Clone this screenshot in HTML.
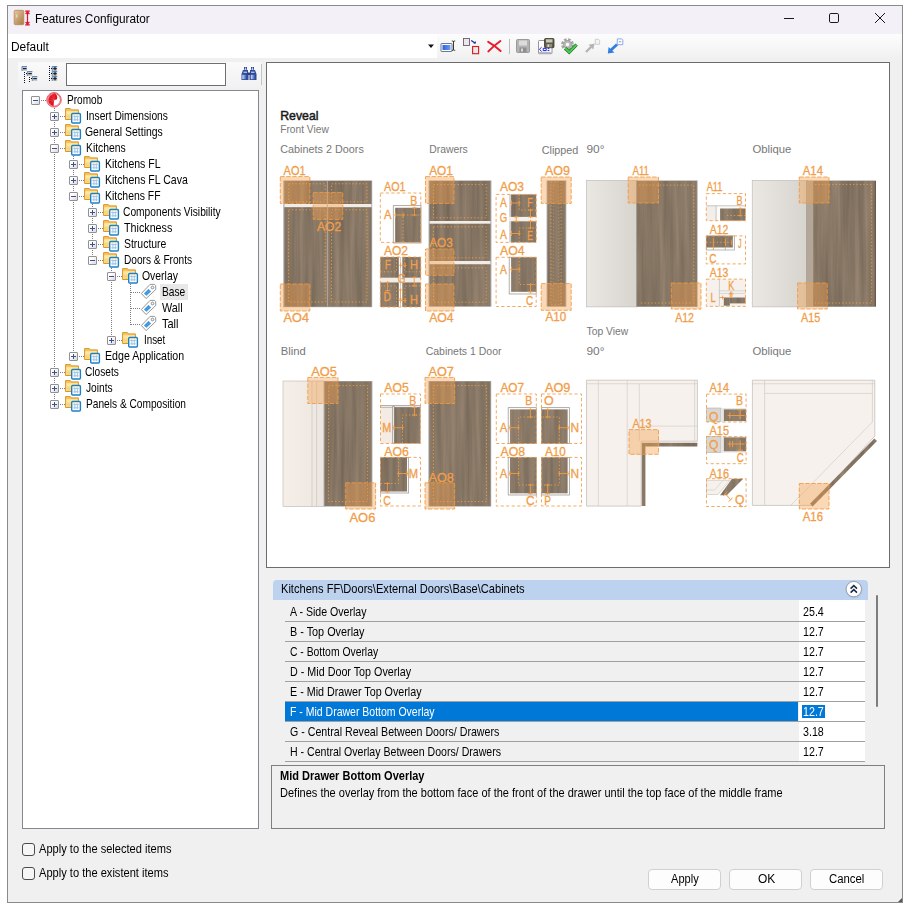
<!DOCTYPE html>
<html lang="en"><head><meta charset="utf-8"><title>Features Configurator</title>
<style>
html,body{margin:0;padding:0;background:#fff;}
body{width:920px;height:913px;position:relative;overflow:hidden;font-family:"Liberation Sans",sans-serif;font-size:11px;color:#000;}
.a{position:absolute;box-sizing:border-box;}
.t{position:absolute;white-space:pre;display:block;transform-origin:0 0;}
svg{position:absolute;overflow:visible;}
.dv{position:absolute;width:1px;background:repeating-linear-gradient(to bottom,#7c7c7c 0 1px,transparent 1px 2px);}
.dh{position:absolute;height:1px;background:repeating-linear-gradient(to right,#7c7c7c 0 1px,transparent 1px 2px);}
.bx{position:absolute;width:9px;height:9px;box-sizing:border-box;border:1px solid #919191;background:linear-gradient(135deg,#fff 30%,#d8d8d8);border-radius:1px;}
.bx i{position:absolute;left:1px;top:3px;width:5px;height:1px;background:#3c4f94;}
.bx b{position:absolute;left:3px;top:1px;width:1px;height:5px;background:#3c4f94;}
.btn{position:absolute;box-sizing:border-box;border:1px solid #d0d0d0;border-radius:4px;background:#fdfdfd;}
.row{position:absolute;box-sizing:border-box;left:285px;width:580px;height:20px;border-bottom:1px solid #a0a0a0;}
</style></head>
<body>
<div class="a" style="left:7px;top:5px;width:896px;height:898px;border:1px solid #8a8a8a;background:#f0f0f0;"></div><div class="a" style="left:8px;top:6px;width:894px;height:27.5px;background:#f3f1f7;"></div><svg style="left:13px;top:9px" width="20" height="18" viewBox="0 0 20 18"><defs><linearGradient id="gi" x1="0" y1="0" x2="1" y2="1"><stop offset="0" stop-color="#e6c9a0"/><stop offset="1" stop-color="#a9783f"/></linearGradient></defs><rect x="1.2" y="1.3" width="9.6" height="14.4" rx="1.2" fill="url(#gi)" stroke="#b08a5c" stroke-width="0.8"/><rect x="3.3" y="5.5" width="1" height="3" fill="#e8e8f0"/><path d="M14.5 2.5V15.5M12.2 2.2H16.8M12.2 15.8H16.8M12.6 5L14.5 2.8L16.4 5M12.6 13L14.5 15.2L16.4 13" fill="none" stroke="#e3122a" stroke-width="1.2"/></svg><span id="t1" class="t" style="left:35.20px;top:13.40px;font-size:12.4px;line-height:12.4px;color:#000;transform:scaleX(0.9525);">Features Configurator</span><svg style="left:780px;top:8px" width="110" height="20" viewBox="780 8 110 20" fill="none" stroke="#1a1a1a" stroke-width="1"><path d="M784 18.5H794"/><rect x="829.5" y="13.5" width="9" height="9" rx="1.3"/><path d="M875 13L885 23M885 13L875 23"/></svg><div class="a" style="left:8px;top:33.5px;width:894px;height:24.5px;background:linear-gradient(#fdfdfd,#f1f1f1);"></div><div class="a" style="left:8px;top:33.5px;width:429px;height:24.5px;background:#fff;"></div><span id="t2" class="t" style="left:11.20px;top:41.44px;font-size:12px;line-height:12px;color:#000;transform:scaleX(0.9939);">Default</span><svg style="left:427px;top:44px" width="8" height="5" viewBox="0 0 8 5"><path d="M1 0.5H7L4 4Z" fill="#111"/></svg><svg style="left:440px;top:40px" width="16" height="14" viewBox="0 0 16 14"><defs><linearGradient id="gb" x1="0" y1="0" x2="1" y2="0"><stop offset="0" stop-color="#2a62e0"/><stop offset="1" stop-color="#6f9df0"/></linearGradient></defs><rect x="1" y="3.500" width="11" height="8" rx="0.5" fill="#fff" stroke="#5a6a86" stroke-width="0.9"/><rect x="2.500" y="5" width="8" height="5" fill="url(#gb)"/><path d="M13.500 1.800V9.600M11.800 1H12.500Q13.500 1 13.500 2Q13.500 1 14.500 1H15.200M11.800 10.400H12.500Q13.500 10.400 13.500 9.400Q13.500 10.400 14.500 10.400H15.200" stroke="#222" stroke-width="0.9" fill="none"/></svg><svg style="left:463px;top:38px" width="17" height="17" viewBox="0 0 17 17"><rect x="0.500" y="0.500" width="6" height="7" fill="#e9e9ec" stroke="#6d5a72" stroke-width="0.9"/><rect x="9.600" y="8.500" width="6" height="7.200" fill="#e9e9ec" stroke="#e01818" stroke-width="1.100"/><path d="M8.200 2.400L12 5" stroke="#1c2f94" stroke-width="1.200" fill="none"/><path d="M10.400 5.600L13 5.600L12.600 3Z" fill="#1c2f94"/></svg><svg style="left:487px;top:40px" width="15" height="13" viewBox="0 0 15 13"><path d="M1.200 1.800Q7 5 13.600 11M13.400 1Q7 5.500 1.400 11.400" stroke="#ea1c2c" stroke-width="2" stroke-linecap="round" fill="none"/></svg><div class="a" style="left:509px;top:39px;width:1px;height:15px;background:#bdbdbd;"></div><svg style="left:516px;top:39px" width="14" height="14" viewBox="0 0 14 14"><rect x="0.5" y="0.5" width="13" height="13" rx="1" fill="#b4b4b4" stroke="#9a9a9a"/><rect x="3" y="1.5" width="8" height="5" fill="#dcdcdc"/><rect x="3.5" y="8.5" width="7" height="4.5" fill="#8f8f8f"/><rect x="5" y="9.5" width="2" height="3" fill="#d8d8d8"/></svg><svg style="left:538px;top:38px" width="17" height="17" viewBox="0 0 17 17"><rect x="0.500" y="2.500" width="13.500" height="13.200" rx="0.800" fill="#fff" stroke="#8a8a96" stroke-width="0.9"/><rect x="1" y="13.800" width="12.500" height="1.500" fill="#b8b8c0"/><rect x="6.500" y="0.500" width="9.500" height="9.200" rx="1" fill="#5c5a46" stroke="#3a392c" stroke-width="0.8"/><rect x="8" y="1.300" width="6.500" height="3.200" fill="#c9c7ba"/><rect x="8.500" y="6" width="5.500" height="3.300" fill="#8d8b7c"/><rect x="9.500" y="6.500" width="1.600" height="2.500" fill="#d8d6c8"/><path d="M3.600 9.200L1.400 11.300L3.600 13.400M5.200 10.300H8.200V12.600H5.200ZM9.600 10.400H11.400M9.600 12.400H11.400" stroke="#1a22e0" stroke-width="1" fill="none"/></svg><svg style="left:560px;top:37px" width="19" height="18" viewBox="0 0 19 18"><circle cx="7.500" cy="7.500" r="4.700" fill="none" stroke="#a3a3a3" stroke-width="3.400" stroke-dasharray="2.300 1.390"/><circle cx="7.500" cy="7.500" r="3.800" fill="#bdbdbd" stroke="#a3a3a3" stroke-width="1.200"/><circle cx="7.500" cy="7.500" r="1.700" fill="#fafafa"/><path d="M5.200 11.200L9.200 15.200L16.600 7.600" fill="none" stroke="#1c7e2a" stroke-width="3.400"/><path d="M5.200 11.200L9.200 15.200L16.600 7.600" fill="none" stroke="#52cc52" stroke-width="1.700"/></svg><svg style="left:585px;top:38px" width="16" height="16" viewBox="0 0 16 16"><path d="M10.300 1.300H13.600L14.600 2.300V6.300H10.300Z" fill="#f4f4f4" stroke="#c4c4c4" stroke-width="0.8"/><path d="M1 14L6.500 8.500" stroke="#b4b4b4" stroke-width="2.400"/><path d="M3.600 6.800L9.600 5.400L8.200 11.400Z" fill="#b4b4b4"/></svg><svg style="left:607px;top:38px" width="17" height="16" viewBox="0 0 17 16"><path d="M10.300 0.900H14.600L15.800 2.100V6.700H10.300Z" fill="#fff" stroke="#7f9fe0" stroke-width="0.9"/><path d="M11.800 3.800h2.500" stroke="#6f8fd0" stroke-width="0.9"/><path d="M4 12L10 6.500" stroke="#2f7fe0" stroke-width="2.800"/><path d="M0.800 15.400L1.600 9L7.400 14.600Z" fill="#2f7fe0"/></svg><div class="a" style="left:18px;top:62px;width:243px;height:26px;background:linear-gradient(#fafafa,#f1f1f1);"></div><div class="a" style="left:261px;top:64px;width:1px;height:21px;background:#c4c4c4;"></div><div class="a" style="left:66px;top:63px;width:160px;height:23px;border:1px solid #6f6f6f;background:#fff;"></div><svg style="left:22px;top:66px" width="16" height="17" viewBox="22 66 16 17"><rect x="22" y="66" width="5" height="5" fill="#c9c9c9"/><path d="M22 71V66.5H27" fill="none" stroke="#5b8cc8" stroke-width="1"/><rect x="23" y="68" width="3.500" height="1.200" fill="#222"/><rect x="27.3" y="71" width="5" height="5" fill="#c9c9c9"/><path d="M27.3 76V71.5H32.3" fill="none" stroke="#5b8cc8" stroke-width="1"/><rect x="28.3" y="73" width="3.500" height="1.200" fill="#222"/><rect x="32.3" y="76" width="5" height="5" fill="#c9c9c9"/><path d="M32.3 81V76.5H37.3" fill="none" stroke="#5b8cc8" stroke-width="1"/><rect x="33.3" y="78" width="3.500" height="1.200" fill="#222"/><rect x="24" y="72" width="1" height="1" fill="#111"/><rect x="24" y="74" width="1" height="1" fill="#111"/><rect x="24" y="76" width="1" height="1" fill="#111"/><rect x="24" y="78" width="1" height="1" fill="#111"/><rect x="24" y="80" width="1" height="1" fill="#111"/><rect x="24" y="82" width="1" height="1" fill="#111"/><rect x="26" y="73" width="1" height="1" fill="#111"/><rect x="29" y="77" width="1" height="1" fill="#111"/><rect x="29" y="79" width="1" height="1" fill="#111"/><rect x="29" y="81" width="1" height="1" fill="#111"/><rect x="31" y="78" width="1" height="1" fill="#111"/></svg><svg style="left:48px;top:66px" width="10" height="17" viewBox="48 66 10 17"><rect x="52.2" y="66" width="5" height="5" fill="#c9c9c9"/><path d="M52.2 71V66.5H57.2" fill="none" stroke="#5b8cc8" stroke-width="1"/><rect x="53.2" y="68" width="3.500" height="1.200" fill="#222"/><rect x="54.400000000000006" y="66.8" width="1.200" height="3.600" fill="#222"/><rect x="52.2" y="71" width="5" height="5" fill="#c9c9c9"/><path d="M52.2 76V71.5H57.2" fill="none" stroke="#5b8cc8" stroke-width="1"/><rect x="53.2" y="73" width="3.500" height="1.200" fill="#222"/><rect x="54.400000000000006" y="71.8" width="1.200" height="3.600" fill="#222"/><rect x="52.2" y="76" width="5" height="5" fill="#c9c9c9"/><path d="M52.2 81V76.5H57.2" fill="none" stroke="#5b8cc8" stroke-width="1"/><rect x="53.2" y="78" width="3.500" height="1.200" fill="#222"/><rect x="54.400000000000006" y="76.8" width="1.200" height="3.600" fill="#222"/><rect x="49" y="66" width="1" height="1" fill="#111"/><rect x="49" y="68" width="1" height="1" fill="#111"/><rect x="49" y="70" width="1" height="1" fill="#111"/><rect x="49" y="72" width="1" height="1" fill="#111"/><rect x="49" y="74" width="1" height="1" fill="#111"/><rect x="49" y="76" width="1" height="1" fill="#111"/><rect x="49" y="78" width="1" height="1" fill="#111"/><rect x="49" y="80" width="1" height="1" fill="#111"/><rect x="51" y="68" width="1" height="1" fill="#111"/><rect x="51" y="73" width="1" height="1" fill="#111"/><rect x="51" y="78" width="1" height="1" fill="#111"/></svg><svg style="left:241px;top:66px" width="16" height="15" viewBox="0 0 16 15"><defs><linearGradient id="bn" x1="0" y1="0" x2="1" y2="0"><stop offset="0" stop-color="#d4def6"/><stop offset="0.45" stop-color="#7f98d8"/><stop offset="1" stop-color="#2a4494"/></linearGradient></defs><path d="M3 1h3v3h1v4h0.500v6h-7v-6l1.500-4h1z" fill="#2f4b9a"/><path d="M10 1h3v3h1l1.500 4v6h-7v-6h0.500v-4h1z" fill="#2f4b9a"/><rect x="6.500" y="6.500" width="3" height="2.500" fill="#2a3f86"/><rect x="1.300" y="8.800" width="4.600" height="4.400" fill="url(#bn)"/><rect x="9.800" y="8.800" width="4.600" height="4.400" fill="url(#bn)"/><path d="M2.500 6.200h3.500M10 6.200h3.500M3.600 3.300h1.800M10.600 3.300h1.800" stroke="#e8eefc" stroke-width="1"/><rect x="4" y="1.600" width="1" height="1" fill="#fff"/><rect x="11" y="1.600" width="1" height="1" fill="#fff"/></svg><div class="a" style="left:22px;top:843px;width:13px;height:13px;border:1px solid #4c4c4c;border-radius:3px;background:#f6f6f6;"></div><span id="t3" class="t" style="left:39.00px;top:843.34px;font-size:12px;line-height:12px;color:#000;transform:scaleX(0.9238);">Apply to the selected items</span><div class="a" style="left:22px;top:867px;width:13px;height:13px;border:1px solid #4c4c4c;border-radius:3px;background:#f6f6f6;"></div><span id="t4" class="t" style="left:39.00px;top:867.34px;font-size:12px;line-height:12px;color:#000;transform:scaleX(0.9245);">Apply to the existent items</span><div class="btn" style="left:648px;top:869px;width:73px;height:21px;"></div><span id="t5" class="t" style="left:671.00px;top:873.04px;font-size:12px;line-height:12px;color:#000;transform:scaleX(0.9224);">Apply</span><div class="btn" style="left:729px;top:869px;width:73px;height:21px;"></div><span id="t6" class="t" style="left:757.70px;top:873.04px;font-size:12px;line-height:12px;color:#000;transform:scaleX(0.9975);">OK</span><div class="btn" style="left:810px;top:869px;width:73px;height:21px;"></div><span id="t7" class="t" style="left:828.60px;top:873.04px;font-size:12px;line-height:12px;color:#000;transform:scaleX(0.9476);">Cancel</span><svg style="left:898px;top:898px" width="4" height="4" viewBox="0 0 4 4"><path d="M4 0V4H0Z" fill="#555"/></svg><div class="a" style="left:22px;top:90px;width:237px;height:739px;border:1px solid #828790;background:#fff;"></div><div class="dv" style="left:54px;top:108px;height:297px;"></div><div class="dv" style="left:73px;top:156px;height:201px;"></div><div class="dv" style="left:92px;top:204px;height:57px;"></div><div class="dv" style="left:111px;top:268px;height:73px;"></div><div class="dv" style="left:130px;top:284px;height:41px;"></div><div class="dh" style="left:41px;top:100px;width:5px;"></div><div class="bx" style="left:31px;top:96px;"><i></i></div><svg style="left:46px;top:92px" width="16" height="16" viewBox="0 0 16 16"><circle cx="8" cy="7.800" r="7.300" fill="#fff" stroke="#e2202e" stroke-width="0.700"/><circle cx="8" cy="7.800" r="6.400" fill="none" stroke="#e2202e" stroke-width="0.700"/><path d="M7.600 1.900c1.300-.2 2.500.3 3 1.100.5.800.3 1.400.6 2 .3.500.3 1-.2 1.400.2.500-.1 1-.7 1.100l-1.600.5-.8.500-.2 5.300c-3 0-5.400-2.600-5.400-5.800 0-3.100 2.200-5.600 5.300-6.100z" fill="#e0121f"/><path d="M8.200 8L3.200 5.200M8.200 8L2.600 8.600M8.200 8L4 11.600M8.200 8L5.600 2.600M8.200 8L8.200 2" stroke="#f0686f" stroke-width="0.400" fill="none"/></svg><span id="t8" class="t" style="left:66.80px;top:93.67px;font-size:12.2px;line-height:12.2px;color:#000;transform:scaleX(0.8269);">Promob</span><div class="dh" style="left:60px;top:116px;width:5px;"></div><div class="bx" style="left:50px;top:112px;"><i></i><b></b></div><svg style="left:65px;top:108px" width="16" height="16" viewBox="0 0 16 16"><path d="M0.600 0.600h4.800l1.100 1.300h6.900v9.600h-12.800z" fill="#f6c560" stroke="#d8962c" stroke-width="1"/><path d="M1.200 3.200h11.600v7.700h-11.600z" fill="#fde7a4"/><path d="M1.200 6.600h11.600v4.300h-11.600z" fill="#f9d57c"/><rect x="6.700" y="5.500" width="8.700" height="9.500" rx="1" fill="#fff" stroke="#1c80c6" stroke-width="1.400"/><path d="M8.300 8.600h5.500M8.300 11.800h5.500M9.900 7.700v5.500M12.300 7.700v5.500" stroke="#9cc4ea" stroke-width="1" fill="none"/><path d="M8.500 7.300h1.800M11.800 7.300h1.800" stroke="#f3d27a" stroke-width="0.800"/></svg><span id="t9" class="t" style="left:86.20px;top:109.67px;font-size:12.2px;line-height:12.2px;color:#000;transform:scaleX(0.8396);">Insert Dimensions</span><div class="dh" style="left:60px;top:132px;width:5px;"></div><div class="bx" style="left:50px;top:128px;"><i></i><b></b></div><svg style="left:65px;top:124px" width="16" height="16" viewBox="0 0 16 16"><path d="M0.600 0.600h4.800l1.100 1.300h6.900v9.600h-12.800z" fill="#f6c560" stroke="#d8962c" stroke-width="1"/><path d="M1.200 3.200h11.600v7.700h-11.600z" fill="#fde7a4"/><path d="M1.200 6.600h11.600v4.300h-11.600z" fill="#f9d57c"/><rect x="6.700" y="5.500" width="8.700" height="9.500" rx="1" fill="#fff" stroke="#1c80c6" stroke-width="1.400"/><path d="M8.300 8.600h5.500M8.300 11.800h5.500M9.900 7.700v5.500M12.300 7.700v5.500" stroke="#9cc4ea" stroke-width="1" fill="none"/><path d="M8.500 7.300h1.800M11.800 7.300h1.800" stroke="#f3d27a" stroke-width="0.800"/></svg><span id="t10" class="t" style="left:85.30px;top:125.67px;font-size:12.2px;line-height:12.2px;color:#000;transform:scaleX(0.8569);">General Settings</span><div class="dh" style="left:60px;top:148px;width:5px;"></div><div class="bx" style="left:50px;top:144px;"><i></i></div><svg style="left:65px;top:140px" width="16" height="16" viewBox="0 0 16 16"><path d="M0.600 0.600h4.800l1.100 1.300h6.900v9.600h-12.800z" fill="#f6c560" stroke="#d8962c" stroke-width="1"/><path d="M1.200 3.200h11.600v7.700h-11.600z" fill="#fde7a4"/><path d="M1.200 6.600h11.600v4.300h-11.600z" fill="#f9d57c"/><rect x="6.700" y="5.500" width="8.700" height="9.500" rx="1" fill="#fff" stroke="#1c80c6" stroke-width="1.400"/><path d="M8.300 8.600h5.500M8.300 11.800h5.500M9.900 7.700v5.500M12.300 7.700v5.500" stroke="#9cc4ea" stroke-width="1" fill="none"/><path d="M8.500 7.300h1.800M11.800 7.300h1.800" stroke="#f3d27a" stroke-width="0.800"/></svg><span id="t11" class="t" style="left:86.20px;top:141.67px;font-size:12.2px;line-height:12.2px;color:#000;transform:scaleX(0.8513);">Kitchens</span><div class="dh" style="left:79px;top:164px;width:5px;"></div><div class="bx" style="left:69px;top:160px;"><i></i><b></b></div><svg style="left:84px;top:156px" width="16" height="16" viewBox="0 0 16 16"><path d="M0.600 0.600h4.800l1.100 1.300h6.900v9.600h-12.800z" fill="#f6c560" stroke="#d8962c" stroke-width="1"/><path d="M1.200 3.200h11.600v7.700h-11.600z" fill="#fde7a4"/><path d="M1.200 6.600h11.600v4.300h-11.600z" fill="#f9d57c"/><rect x="6.700" y="5.500" width="8.700" height="9.500" rx="1" fill="#fff" stroke="#1c80c6" stroke-width="1.400"/><path d="M8.300 8.600h5.500M8.300 11.800h5.500M9.900 7.700v5.500M12.300 7.700v5.500" stroke="#9cc4ea" stroke-width="1" fill="none"/><path d="M8.500 7.300h1.800M11.800 7.300h1.800" stroke="#f3d27a" stroke-width="0.800"/></svg><span id="t12" class="t" style="left:105.10px;top:157.67px;font-size:12.2px;line-height:12.2px;color:#000;transform:scaleX(0.8639);">Kitchens FL</span><div class="dh" style="left:79px;top:180px;width:5px;"></div><div class="bx" style="left:69px;top:176px;"><i></i><b></b></div><svg style="left:84px;top:172px" width="16" height="16" viewBox="0 0 16 16"><path d="M0.600 0.600h4.800l1.100 1.300h6.900v9.600h-12.800z" fill="#f6c560" stroke="#d8962c" stroke-width="1"/><path d="M1.200 3.200h11.600v7.700h-11.600z" fill="#fde7a4"/><path d="M1.200 6.600h11.600v4.300h-11.600z" fill="#f9d57c"/><rect x="6.700" y="5.500" width="8.700" height="9.500" rx="1" fill="#fff" stroke="#1c80c6" stroke-width="1.400"/><path d="M8.300 8.600h5.500M8.300 11.800h5.500M9.900 7.700v5.500M12.300 7.700v5.500" stroke="#9cc4ea" stroke-width="1" fill="none"/><path d="M8.500 7.300h1.800M11.800 7.300h1.800" stroke="#f3d27a" stroke-width="0.800"/></svg><span id="t13" class="t" style="left:105.10px;top:173.67px;font-size:12.2px;line-height:12.2px;color:#000;transform:scaleX(0.8648);">Kitchens FL Cava</span><div class="dh" style="left:79px;top:196px;width:5px;"></div><div class="bx" style="left:69px;top:192px;"><i></i></div><svg style="left:84px;top:188px" width="16" height="16" viewBox="0 0 16 16"><path d="M0.600 0.600h4.800l1.100 1.300h6.900v9.600h-12.800z" fill="#f6c560" stroke="#d8962c" stroke-width="1"/><path d="M1.200 3.200h11.600v7.700h-11.600z" fill="#fde7a4"/><path d="M1.200 6.600h11.600v4.300h-11.600z" fill="#f9d57c"/><rect x="6.700" y="5.500" width="8.700" height="9.500" rx="1" fill="#fff" stroke="#1c80c6" stroke-width="1.400"/><path d="M8.300 8.600h5.500M8.300 11.800h5.500M9.900 7.700v5.500M12.300 7.700v5.500" stroke="#9cc4ea" stroke-width="1" fill="none"/><path d="M8.500 7.300h1.800M11.800 7.300h1.800" stroke="#f3d27a" stroke-width="0.800"/></svg><span id="t14" class="t" style="left:105.10px;top:189.67px;font-size:12.2px;line-height:12.2px;color:#000;transform:scaleX(0.8550);">Kitchens FF</span><div class="dh" style="left:98px;top:212px;width:5px;"></div><div class="bx" style="left:88px;top:208px;"><i></i><b></b></div><svg style="left:103px;top:204px" width="16" height="16" viewBox="0 0 16 16"><path d="M0.600 0.600h4.800l1.100 1.300h6.900v9.600h-12.800z" fill="#f6c560" stroke="#d8962c" stroke-width="1"/><path d="M1.200 3.200h11.600v7.700h-11.600z" fill="#fde7a4"/><path d="M1.200 6.600h11.600v4.300h-11.600z" fill="#f9d57c"/><rect x="6.700" y="5.500" width="8.700" height="9.500" rx="1" fill="#fff" stroke="#1c80c6" stroke-width="1.400"/><path d="M8.300 8.600h5.500M8.300 11.800h5.500M9.900 7.700v5.500M12.300 7.700v5.500" stroke="#9cc4ea" stroke-width="1" fill="none"/><path d="M8.500 7.300h1.800M11.800 7.300h1.800" stroke="#f3d27a" stroke-width="0.800"/></svg><span id="t15" class="t" style="left:123.20px;top:205.67px;font-size:12.2px;line-height:12.2px;color:#000;transform:scaleX(0.8392);">Components Visibility</span><div class="dh" style="left:98px;top:228px;width:5px;"></div><div class="bx" style="left:88px;top:224px;"><i></i><b></b></div><svg style="left:103px;top:220px" width="16" height="16" viewBox="0 0 16 16"><path d="M0.600 0.600h4.800l1.100 1.300h6.900v9.600h-12.800z" fill="#f6c560" stroke="#d8962c" stroke-width="1"/><path d="M1.200 3.200h11.600v7.700h-11.600z" fill="#fde7a4"/><path d="M1.200 6.600h11.600v4.300h-11.600z" fill="#f9d57c"/><rect x="6.700" y="5.500" width="8.700" height="9.500" rx="1" fill="#fff" stroke="#1c80c6" stroke-width="1.400"/><path d="M8.300 8.600h5.500M8.300 11.800h5.500M9.900 7.700v5.500M12.300 7.700v5.500" stroke="#9cc4ea" stroke-width="1" fill="none"/><path d="M8.500 7.300h1.800M11.800 7.300h1.800" stroke="#f3d27a" stroke-width="0.800"/></svg><span id="t16" class="t" style="left:123.90px;top:221.67px;font-size:12.2px;line-height:12.2px;color:#000;transform:scaleX(0.8802);">Thickness</span><div class="dh" style="left:98px;top:244px;width:5px;"></div><div class="bx" style="left:88px;top:240px;"><i></i><b></b></div><svg style="left:103px;top:236px" width="16" height="16" viewBox="0 0 16 16"><path d="M0.600 0.600h4.800l1.100 1.300h6.900v9.600h-12.800z" fill="#f6c560" stroke="#d8962c" stroke-width="1"/><path d="M1.200 3.200h11.600v7.700h-11.600z" fill="#fde7a4"/><path d="M1.200 6.600h11.600v4.300h-11.600z" fill="#f9d57c"/><rect x="6.700" y="5.500" width="8.700" height="9.500" rx="1" fill="#fff" stroke="#1c80c6" stroke-width="1.400"/><path d="M8.300 8.600h5.500M8.300 11.800h5.500M9.900 7.700v5.500M12.300 7.700v5.500" stroke="#9cc4ea" stroke-width="1" fill="none"/><path d="M8.500 7.300h1.800M11.800 7.300h1.800" stroke="#f3d27a" stroke-width="0.800"/></svg><span id="t17" class="t" style="left:123.90px;top:237.67px;font-size:12.2px;line-height:12.2px;color:#000;transform:scaleX(0.8574);">Structure</span><div class="dh" style="left:98px;top:260px;width:5px;"></div><div class="bx" style="left:88px;top:256px;"><i></i></div><svg style="left:103px;top:252px" width="16" height="16" viewBox="0 0 16 16"><path d="M0.600 0.600h4.800l1.100 1.300h6.900v9.600h-12.800z" fill="#f6c560" stroke="#d8962c" stroke-width="1"/><path d="M1.200 3.200h11.600v7.700h-11.600z" fill="#fde7a4"/><path d="M1.200 6.600h11.600v4.300h-11.600z" fill="#f9d57c"/><rect x="6.700" y="5.500" width="8.700" height="9.500" rx="1" fill="#fff" stroke="#1c80c6" stroke-width="1.400"/><path d="M8.300 8.600h5.500M8.300 11.800h5.500M9.900 7.700v5.500M12.300 7.700v5.500" stroke="#9cc4ea" stroke-width="1" fill="none"/><path d="M8.500 7.300h1.800M11.800 7.300h1.800" stroke="#f3d27a" stroke-width="0.800"/></svg><span id="t18" class="t" style="left:124.10px;top:253.67px;font-size:12.2px;line-height:12.2px;color:#000;transform:scaleX(0.8310);">Doors &amp; Fronts</span><div class="dh" style="left:117px;top:276px;width:5px;"></div><div class="bx" style="left:107px;top:272px;"><i></i></div><svg style="left:122px;top:268px" width="16" height="16" viewBox="0 0 16 16"><path d="M0.600 0.600h4.800l1.100 1.300h6.900v9.600h-12.800z" fill="#f6c560" stroke="#d8962c" stroke-width="1"/><path d="M1.200 3.200h11.600v7.700h-11.600z" fill="#fde7a4"/><path d="M1.200 6.600h11.600v4.300h-11.600z" fill="#f9d57c"/><rect x="6.700" y="5.500" width="8.700" height="9.500" rx="1" fill="#fff" stroke="#1c80c6" stroke-width="1.400"/><path d="M8.300 8.600h5.500M8.300 11.800h5.500M9.900 7.700v5.500M12.300 7.700v5.500" stroke="#9cc4ea" stroke-width="1" fill="none"/><path d="M8.500 7.300h1.800M11.800 7.300h1.800" stroke="#f3d27a" stroke-width="0.800"/></svg><span id="t19" class="t" style="left:142.00px;top:269.67px;font-size:12.2px;line-height:12.2px;color:#000;transform:scaleX(0.8548);">Overlay</span><div class="dh" style="left:131px;top:292px;width:10px;"></div><svg style="left:141px;top:284px" width="16" height="16" viewBox="0 0 16 16"><path d="M0.300 9.500L5.100 14.600L14.700 5.600V1.500L13.600 0.400H9.100Z" fill="#fdfdfd" stroke="#8a8a8a" stroke-width="0.900" stroke-linejoin="round"/><path d="M3 9.400L7.400 4.900L10 7.400L5.500 11.800Z" fill="#2b8fe0"/><path d="M4.300 8.600l2.400 2.400M5.500 7.400l2.400 2.400M6.700 6.200l2.400 2.400" stroke="#8cc8f4" stroke-width="0.500"/><circle cx="11.500" cy="3.500" r="1.300" fill="#fff" stroke="#7e7e7e" stroke-width="0.900"/></svg><div class="a" style="left:160px;top:284px;width:28px;height:16px;background:#e8e8e8;"></div><span id="t20" class="t" style="left:162.00px;top:285.67px;font-size:12.2px;line-height:12.2px;color:#000;transform:scaleX(0.8387);">Base</span><div class="dh" style="left:131px;top:308px;width:10px;"></div><svg style="left:141px;top:300px" width="16" height="16" viewBox="0 0 16 16"><path d="M0.300 9.500L5.100 14.600L14.700 5.600V1.500L13.600 0.400H9.100Z" fill="#fdfdfd" stroke="#8a8a8a" stroke-width="0.900" stroke-linejoin="round"/><path d="M3 9.400L7.400 4.900L10 7.400L5.500 11.800Z" fill="#2b8fe0"/><path d="M4.300 8.600l2.400 2.400M5.500 7.400l2.400 2.400M6.700 6.200l2.400 2.400" stroke="#8cc8f4" stroke-width="0.500"/><circle cx="11.500" cy="3.500" r="1.300" fill="#fff" stroke="#7e7e7e" stroke-width="0.900"/></svg><span id="t21" class="t" style="left:161.80px;top:301.67px;font-size:12.2px;line-height:12.2px;color:#000;transform:scaleX(0.8860);">Wall</span><div class="dh" style="left:131px;top:324px;width:10px;"></div><svg style="left:141px;top:316px" width="16" height="16" viewBox="0 0 16 16"><path d="M0.300 9.500L5.100 14.600L14.700 5.600V1.500L13.600 0.400H9.100Z" fill="#fdfdfd" stroke="#8a8a8a" stroke-width="0.900" stroke-linejoin="round"/><path d="M3 9.400L7.400 4.900L10 7.400L5.500 11.800Z" fill="#2b8fe0"/><path d="M4.300 8.600l2.400 2.400M5.500 7.400l2.400 2.400M6.700 6.200l2.400 2.400" stroke="#8cc8f4" stroke-width="0.500"/><circle cx="11.500" cy="3.500" r="1.300" fill="#fff" stroke="#7e7e7e" stroke-width="0.900"/></svg><span id="t22" class="t" style="left:161.80px;top:317.67px;font-size:12.2px;line-height:12.2px;color:#000;transform:scaleX(0.9018);">Tall</span><div class="dh" style="left:117px;top:340px;width:5px;"></div><div class="bx" style="left:107px;top:336px;"><i></i><b></b></div><svg style="left:122px;top:332px" width="16" height="16" viewBox="0 0 16 16"><path d="M0.600 0.600h4.800l1.100 1.300h6.900v9.600h-12.800z" fill="#f6c560" stroke="#d8962c" stroke-width="1"/><path d="M1.200 3.200h11.600v7.700h-11.600z" fill="#fde7a4"/><path d="M1.200 6.600h11.600v4.300h-11.600z" fill="#f9d57c"/><rect x="6.700" y="5.500" width="8.700" height="9.500" rx="1" fill="#fff" stroke="#1c80c6" stroke-width="1.400"/><path d="M8.300 8.600h5.500M8.300 11.800h5.500M9.900 7.700v5.500M12.300 7.700v5.500" stroke="#9cc4ea" stroke-width="1" fill="none"/><path d="M8.500 7.300h1.800M11.800 7.300h1.800" stroke="#f3d27a" stroke-width="0.800"/></svg><span id="t23" class="t" style="left:143.50px;top:333.67px;font-size:12.2px;line-height:12.2px;color:#000;transform:scaleX(0.8057);">Inset</span><div class="dh" style="left:79px;top:356px;width:5px;"></div><div class="bx" style="left:69px;top:352px;"><i></i><b></b></div><svg style="left:84px;top:348px" width="16" height="16" viewBox="0 0 16 16"><path d="M0.600 0.600h4.800l1.100 1.300h6.900v9.600h-12.800z" fill="#f6c560" stroke="#d8962c" stroke-width="1"/><path d="M1.200 3.200h11.600v7.700h-11.600z" fill="#fde7a4"/><path d="M1.200 6.600h11.600v4.300h-11.600z" fill="#f9d57c"/><rect x="6.700" y="5.500" width="8.700" height="9.500" rx="1" fill="#fff" stroke="#1c80c6" stroke-width="1.400"/><path d="M8.300 8.600h5.500M8.300 11.800h5.500M9.900 7.700v5.500M12.300 7.700v5.500" stroke="#9cc4ea" stroke-width="1" fill="none"/><path d="M8.500 7.300h1.800M11.800 7.300h1.800" stroke="#f3d27a" stroke-width="0.800"/></svg><span id="t24" class="t" style="left:105.10px;top:349.67px;font-size:12.2px;line-height:12.2px;color:#000;transform:scaleX(0.8710);">Edge Application</span><div class="dh" style="left:60px;top:372px;width:5px;"></div><div class="bx" style="left:50px;top:368px;"><i></i><b></b></div><svg style="left:65px;top:364px" width="16" height="16" viewBox="0 0 16 16"><path d="M0.600 0.600h4.800l1.100 1.300h6.900v9.600h-12.800z" fill="#f6c560" stroke="#d8962c" stroke-width="1"/><path d="M1.200 3.200h11.600v7.700h-11.600z" fill="#fde7a4"/><path d="M1.200 6.600h11.600v4.300h-11.600z" fill="#f9d57c"/><rect x="6.700" y="5.500" width="8.700" height="9.500" rx="1" fill="#fff" stroke="#1c80c6" stroke-width="1.400"/><path d="M8.300 8.600h5.500M8.300 11.800h5.500M9.900 7.700v5.500M12.300 7.700v5.500" stroke="#9cc4ea" stroke-width="1" fill="none"/><path d="M8.500 7.300h1.800M11.800 7.300h1.800" stroke="#f3d27a" stroke-width="0.800"/></svg><span id="t25" class="t" style="left:85.30px;top:365.67px;font-size:12.2px;line-height:12.2px;color:#000;transform:scaleX(0.8317);">Closets</span><div class="dh" style="left:60px;top:388px;width:5px;"></div><div class="bx" style="left:50px;top:384px;"><i></i><b></b></div><svg style="left:65px;top:380px" width="16" height="16" viewBox="0 0 16 16"><path d="M0.600 0.600h4.800l1.100 1.300h6.900v9.600h-12.800z" fill="#f6c560" stroke="#d8962c" stroke-width="1"/><path d="M1.200 3.200h11.600v7.700h-11.600z" fill="#fde7a4"/><path d="M1.200 6.600h11.600v4.300h-11.600z" fill="#f9d57c"/><rect x="6.700" y="5.500" width="8.700" height="9.500" rx="1" fill="#fff" stroke="#1c80c6" stroke-width="1.400"/><path d="M8.300 8.600h5.500M8.300 11.800h5.500M9.900 7.700v5.500M12.300 7.700v5.500" stroke="#9cc4ea" stroke-width="1" fill="none"/><path d="M8.500 7.300h1.800M11.800 7.300h1.800" stroke="#f3d27a" stroke-width="0.800"/></svg><span id="t26" class="t" style="left:85.60px;top:381.67px;font-size:12.2px;line-height:12.2px;color:#000;transform:scaleX(0.8385);">Joints</span><div class="dh" style="left:60px;top:404px;width:5px;"></div><div class="bx" style="left:50px;top:400px;"><i></i><b></b></div><svg style="left:65px;top:396px" width="16" height="16" viewBox="0 0 16 16"><path d="M0.600 0.600h4.800l1.100 1.300h6.900v9.600h-12.800z" fill="#f6c560" stroke="#d8962c" stroke-width="1"/><path d="M1.200 3.200h11.600v7.700h-11.600z" fill="#fde7a4"/><path d="M1.200 6.600h11.600v4.300h-11.600z" fill="#f9d57c"/><rect x="6.700" y="5.500" width="8.700" height="9.500" rx="1" fill="#fff" stroke="#1c80c6" stroke-width="1.400"/><path d="M8.300 8.600h5.500M8.300 11.800h5.500M9.900 7.700v5.500M12.300 7.700v5.500" stroke="#9cc4ea" stroke-width="1" fill="none"/><path d="M8.500 7.300h1.800M11.800 7.300h1.800" stroke="#f3d27a" stroke-width="0.800"/></svg><span id="t27" class="t" style="left:86.20px;top:397.67px;font-size:12.2px;line-height:12.2px;color:#000;transform:scaleX(0.8340);">Panels &amp; Composition</span><div class="a" style="left:266px;top:62px;width:624px;height:506px;border:1px solid #6c6c6c;background:#fff;"></div><svg style="left:0;top:0" width="920" height="913" viewBox="0 0 920 913" font-family="Liberation Sans, sans-serif" font-size="12" fill="#f2a14e"><defs>
<filter id="wf" x="0" y="0" width="100%" height="100%" filterUnits="objectBoundingBox" color-interpolation-filters="sRGB">
<feTurbulence type="fractalNoise" baseFrequency="0.2 0.008" numOctaves="3" seed="7" result="n"/>
<feColorMatrix in="n" type="matrix" values="0.18 0 0 0 0.44  0.16 0 0 0 0.385  0.14 0 0 0 0.325  0 0 0 0 1" result="c"/>
<feComposite in="c" in2="SourceAlpha" operator="in"/>
</filter>
<linearGradient id="lt" x1="0" y1="0" x2="1" y2="0"><stop offset="0" stop-color="#ebe8e4"/><stop offset="1" stop-color="#d7d3cd"/></linearGradient>
<linearGradient id="lt2" x1="0" y1="0" x2="1" y2="0"><stop offset="0" stop-color="#f6efe8"/><stop offset="1" stop-color="#ece6e0"/></linearGradient>
<style>
.q{fill:#f6a04a;fill-opacity:.4;stroke:#f09a42;stroke-opacity:.85;stroke-width:1;stroke-dasharray:4.4 1.6}
.b{fill:none;stroke:#f2a250;stroke-width:.9;stroke-dasharray:3.2 2.3}
.o{fill:none;stroke:#f5a548;stroke-opacity:.9;stroke-width:.9;stroke-dasharray:1.3 2.15}
text{stroke:#f09a42;stroke-width:.3}
text.g{stroke:none}
</style>
</defs><rect x="283.3" y="180.4" width="88.9" height="126.8" fill="#a9a6a3" /><rect x="284.4" y="204.0" width="87.0" height="3.3" fill="#f1ece6" /><rect x="393.3" y="205.6" width="27.7" height="37.4" fill="#fbfaf9" stroke="#a29f9c" stroke-width="0.8" /><rect x="398.8" y="257.0" width="3.5" height="50.0" fill="#fbfaf9" /><rect x="380.3" y="277.5" width="40.5" height="4.8" fill="#f1ece6" /><rect x="428.6" y="180.4" width="62.8" height="126.3" fill="#a9a6a3" /><rect x="429.6" y="221.0" width="60.8" height="2.8" fill="#f1ece6" /><rect x="429.6" y="261.0" width="60.8" height="3.4" fill="#f1ece6" /><rect x="509.2" y="194.4" width="2.0" height="48.0" fill="#d0cdca" /><rect x="509.2" y="216.9" width="27.0" height="4.4" fill="#f4f0ea" /><rect x="509.2" y="257.3" width="27.0" height="36.7" fill="#fbfaf9" stroke="#a29f9c" stroke-width="0.8" /><rect x="546.6" y="180.4" width="19.7" height="126.3" fill="#a9a6a3" /><rect x="586.3" y="180.4" width="51.1" height="126.5" fill="url(#lt)" stroke="#b9b6b2" stroke-width="0.6" /><rect x="636.0" y="180.4" width="61.6" height="126.5" fill="#a9a6a3" /><rect x="706.3" y="205.8" width="9.8" height="14.9" fill="#f3eeea" /><rect x="716.1" y="205.8" width="29.4" height="14.9" fill="#fbfaf9" /><rect x="706.3" y="235.9" width="28.1" height="14.1" fill="#fbfaf9" stroke="#a29f9c" stroke-width="0.7" /><rect x="706.3" y="279.1" width="39.2" height="27.3" fill="#f6f1ec" /><rect x="719.4" y="291.0" width="26.1" height="2.2" fill="#fff" /><rect x="752.2" y="180.4" width="55.3" height="126.5" fill="url(#lt)" stroke="#b9b6b2" stroke-width="0.6" /><rect x="806.0" y="180.4" width="70.0" height="126.5" fill="#a9a6a3" /><rect x="806.6" y="181.0" width="6.8" height="125.4" fill="#b5a798" /><rect x="283.0" y="381.0" width="41.4" height="125.6" fill="url(#lt2)" stroke="#b9b6b2" stroke-width="0.6" /><rect x="323.6" y="381.0" width="48.8" height="125.6" fill="#a9a6a3" /><rect x="380.5" y="406.3" width="13.2" height="37.2" fill="#f4ebe4" /><rect x="380.5" y="405.6" width="40.0" height="1.6" fill="#fbfaf9" stroke="#a29f9c" stroke-width="0.8" /><rect x="392.6" y="406.3" width="1.6" height="37.2" fill="#fbfaf9" stroke="#a29f9c" stroke-width="0.8" /><rect x="380.5" y="457.4" width="28.1" height="35.6" fill="#fbfaf9" stroke="#a29f9c" stroke-width="0.8" /><rect x="428.4" y="381.0" width="62.8" height="125.6" fill="#a9a6a3" /><rect x="508.2" y="407.6" width="28.1" height="35.9" fill="#fbfaf9" stroke="#a29f9c" stroke-width="0.8" /><rect x="541.5" y="407.6" width="27.9" height="35.9" fill="#fbfaf9" stroke="#a29f9c" stroke-width="0.8" /><rect x="508.2" y="457.4" width="28.1" height="37.6" fill="#fbfaf9" stroke="#a29f9c" stroke-width="0.8" /><rect x="541.5" y="457.4" width="27.9" height="37.6" fill="#fbfaf9" stroke="#a29f9c" stroke-width="0.8" /><path d="M586.5 380.2H697.4V441.2H641.2V506.1H586.5Z" fill="#f6f1ec" stroke="#bdb9b4" stroke-width="0.7"/><rect x="706.5" y="408.0" width="14.5" height="13.5" fill="#d9d7d4" stroke="#a8a5a1" stroke-width="0.5" /><rect x="721.0" y="408.0" width="25.1" height="13.5" fill="#e8e6e3" /><rect x="706.5" y="436.6" width="14.5" height="16.0" fill="#d9d7d4" stroke="#a8a5a1" stroke-width="0.5" /><rect x="721.0" y="436.6" width="25.1" height="16.0" fill="#e8e6e3" /><path d="M706.5 480.3H730L717.9 494.5H706.5Z" fill="#f6f1ec" stroke="#c4bfb9" stroke-width="0.6"/><path d="M706.5 490H714.5L723 480.3" fill="none" stroke="#cfcac4" stroke-width="0.6"/><path d="M752.4 380.2H874.8V436L811.6 505.4H752.4Z" fill="#f6f1ec" stroke="#bdb9b4" stroke-width="0.7"/><g filter="url(#wf)" fill="#7a6652"><rect x="284.4" y="181.0" width="87.0" height="23.0"/><rect x="284.4" y="207.3" width="87.0" height="99.3"/><rect x="395.2" y="207.8" width="25.6" height="34.6"/><rect x="380.3" y="257.0" width="18.5" height="20.7"/><rect x="402.3" y="257.0" width="18.5" height="20.7"/><rect x="380.3" y="282.4" width="18.5" height="24.6"/><rect x="402.3" y="282.4" width="18.5" height="24.6"/><rect x="429.6" y="181.0" width="60.8" height="40.0"/><rect x="429.6" y="223.8" width="60.8" height="37.2"/><rect x="429.6" y="264.4" width="60.8" height="41.8"/><rect x="511.1" y="194.4" width="25.1" height="22.5"/><rect x="511.1" y="221.3" width="25.1" height="21.1"/><rect x="511.1" y="257.3" width="25.1" height="34.5"/><rect x="547.6" y="181.0" width="17.8" height="125.2"/><rect x="636.8" y="181.0" width="60.0" height="125.4"/><rect x="720.1" y="208.5" width="25.4" height="12.2"/><rect x="706.3" y="235.9" width="26.5" height="11.6"/><rect x="723.8" y="297.5" width="6.0" height="8.2"/><rect x="729.8" y="297.5" width="15.7" height="5.9"/><rect x="813.2" y="181.0" width="62.2" height="125.4"/><rect x="324.6" y="381.6" width="47.0" height="124.4"/><rect x="394.2" y="407.2" width="26.3" height="36.3"/><rect x="380.5" y="457.4" width="26.5" height="34.1"/><rect x="429.4" y="381.6" width="61.0" height="124.4"/><rect x="510.0" y="409.4" width="26.3" height="34.1"/><rect x="541.5" y="409.4" width="26.1" height="34.1"/><rect x="510.0" y="457.4" width="26.3" height="35.9"/><rect x="541.5" y="457.4" width="26.1" height="35.9"/><path d="M697.4 442.8H641.8V506H645.4V446.4H697.4Z"/><rect x="723.9" y="409.4" width="22.2" height="11.6"/><rect x="723.9" y="437.4" width="22.2" height="13.8"/><path d="M732 478.7H743.2L726.8 495.2H720Z"/><path d="M874.4 438.4L810 503.8L812.6 506.4L877 441Z"/></g><path d="M400.5 257V307" fill="none" stroke="#b5b2ae" stroke-width="0.7"/><path d="M706.3 205.8H745.5M716.1 205.8V220.7" fill="none" stroke="#b1aeaa" stroke-width="0.7"/><path d="M719.4 279.1V306.4M719.4 291H745.5M719.4 293.2H745.5" fill="none" stroke="#b9b5b0" stroke-width="0.6"/><text x="280.2" y="119.5" font-size="13.4" style="fill:#1a1a1a;stroke:#1a1a1a;stroke-width:.5px" textLength="38.3" lengthAdjust="spacingAndGlyphs">Reveal</text><text x="280.2" y="132.8" font-size="10.5" class="g" fill="#777" textLength="48.6" lengthAdjust="spacingAndGlyphs">Front View</text><text x="280.3" y="153.0" font-size="11.5" class="g" fill="#777" textLength="83.5" lengthAdjust="spacingAndGlyphs">Cabinets 2 Doors</text><text x="429.2" y="153.0" font-size="11.5" class="g" fill="#777" textLength="38.6" lengthAdjust="spacingAndGlyphs">Drawers</text><text x="541.7" y="154.3" font-size="11.5" class="g" fill="#777" textLength="36.6" lengthAdjust="spacingAndGlyphs">Clipped</text><text x="586.5" y="153.3" font-size="11.5" class="g" fill="#777" textLength="18.0" lengthAdjust="spacingAndGlyphs">90°</text><text x="752.4" y="153.3" font-size="11.5" class="g" fill="#777" textLength="39.0" lengthAdjust="spacingAndGlyphs">Oblique</text><text x="586.5" y="335.2" font-size="10.5" class="g" fill="#777" textLength="41.7" lengthAdjust="spacingAndGlyphs">Top View</text><path d="M327.4 181V306.6" fill="none" stroke="#b5aca2" stroke-width="0.9"/><rect class="o" x="288.6" y="183.8" width="36.6" height="18.0"/><rect class="o" x="331.6" y="183.8" width="35.4" height="18.0"/><rect class="o" x="288.6" y="209.8" width="36.6" height="92.2"/><rect class="o" x="331.6" y="209.8" width="35.4" height="92.2"/><rect class="q" x="280.3" y="176.6" width="29.6" height="26.8"/><rect class="q" x="313.2" y="192.4" width="29.6" height="27.0"/><rect class="q" x="280.3" y="284.0" width="29.6" height="27.0"/><text x="283.6" y="175.0" textLength="22.0" lengthAdjust="spacingAndGlyphs">AO1</text><text x="317.0" y="230.8" textLength="24.2" lengthAdjust="spacingAndGlyphs">AO2</text><text x="283.6" y="322.4" textLength="25.4" lengthAdjust="spacingAndGlyphs">AO4</text><text x="384.0" y="191.0" textLength="21.5" lengthAdjust="spacingAndGlyphs">AO1</text><rect class="b" x="380.3" y="193.0" width="40.5" height="49.4"/><path class="o" d="M403.1 242V215H420.6"/><text x="410.3" y="204.7" textLength="7.0" lengthAdjust="spacingAndGlyphs">B</text><text x="384.0" y="219.4" textLength="7.5" lengthAdjust="spacingAndGlyphs">A</text><path d="M394.2 215.0H404.4M395.5 212.5V217.5M403.1 212.5V217.5" fill="none" stroke="#f09a42" stroke-width="0.9"/><path d="M414.4 206.7V216.3M411.9 208.0H416.9M411.9 215.0H416.9" fill="none" stroke="#f09a42" stroke-width="0.9"/><text x="384.0" y="255.0" textLength="24.0" lengthAdjust="spacingAndGlyphs">AO2</text><rect class="b" x="380.3" y="257.0" width="40.5" height="50.0"/><path class="o" d="M380.5 271.8H396.5V257.5"/><path class="o" d="M420.5 271.8H404.6V257.5"/><path class="o" d="M380.5 286H396.5V307"/><path class="o" d="M420.5 286H405V307"/><text x="384.8" y="268.7" textLength="6.2" lengthAdjust="spacingAndGlyphs">F</text><text x="410.0" y="268.7" textLength="8.0" lengthAdjust="spacingAndGlyphs">H</text><text x="397.8" y="283.4" textLength="7.8" lengthAdjust="spacingAndGlyphs">G</text><text x="383.5" y="300.6" textLength="7.4" lengthAdjust="spacingAndGlyphs">D</text><text x="410.0" y="304.4" textLength="8.0" lengthAdjust="spacingAndGlyphs">H</text><path d="M399.2 265.3H406.5M400.5 262.8V267.8M405.2 262.8V267.8" fill="none" stroke="#f09a42" stroke-width="0.9"/><path d="M399.2 300.5H406.5M400.5 298.0V303.0M405.2 298.0V303.0" fill="none" stroke="#f09a42" stroke-width="0.9"/><path d="M414.2 276.3V287.1M411.7 277.6H416.7M411.7 285.8H416.7" fill="none" stroke="#f09a42" stroke-width="0.9"/><path d="M387.6 281.1V291.8M385.1 282.4H390.1M385.1 290.5H390.1" fill="none" stroke="#f09a42" stroke-width="0.9"/><path d="M400.4 288.7V300.3M397.9 290.0H402.9M397.9 299.0H402.9" fill="none" stroke="#f09a42" stroke-width="0.9"/><rect class="o" x="433.5" y="184.6" width="52.7" height="33.2"/><rect class="o" x="433.5" y="226.8" width="52.7" height="31.0"/><rect class="o" x="433.5" y="267.8" width="52.7" height="34.4"/><rect class="q" x="425.5" y="176.6" width="28.5" height="26.8"/><rect class="q" x="425.5" y="249.0" width="28.5" height="26.3"/><rect class="q" x="425.5" y="284.0" width="28.5" height="27.0"/><text x="429.2" y="175.0" textLength="23.7" lengthAdjust="spacingAndGlyphs">AO1</text><text x="429.2" y="247.2" textLength="23.8" lengthAdjust="spacingAndGlyphs">AO3</text><text x="429.2" y="322.4" textLength="24.5" lengthAdjust="spacingAndGlyphs">AO4</text><text x="500.0" y="191.0" textLength="24.0" lengthAdjust="spacingAndGlyphs">AO3</text><rect class="b" x="496.1" y="194.4" width="40.1" height="48.0"/><path class="o" d="M519.2 194.6V210H536"/><path class="o" d="M519.2 242V228H536"/><text x="500.0" y="207.4" textLength="6.9" lengthAdjust="spacingAndGlyphs">A</text><text x="527.2" y="207.4" textLength="5.4" lengthAdjust="spacingAndGlyphs">F</text><text x="499.8" y="222.3" textLength="7.4" lengthAdjust="spacingAndGlyphs">G</text><text x="500.0" y="238.8" textLength="6.9" lengthAdjust="spacingAndGlyphs">A</text><text x="527.2" y="240.2" textLength="5.6" lengthAdjust="spacingAndGlyphs">E</text><path d="M510.2 203.0H520.5M511.5 200.5V205.5M519.2 200.5V205.5" fill="none" stroke="#f09a42" stroke-width="0.9"/><path d="M510.2 233.5H520.5M511.5 231.0V236.0M519.2 231.0V236.0" fill="none" stroke="#f09a42" stroke-width="0.9"/><path d="M530.5 208.7V218.2M528.0 210.0H533.0M528.0 216.9H533.0" fill="none" stroke="#f09a42" stroke-width="0.9"/><path d="M530.5 220.0V229.3M528.0 221.3H533.0M528.0 228.0H533.0" fill="none" stroke="#f09a42" stroke-width="0.9"/><path d="M516.2 215.6V222.6M513.7 216.9H518.7M513.7 221.3H518.7" fill="none" stroke="#f09a42" stroke-width="0.9"/><text x="500.0" y="255.0" textLength="24.5" lengthAdjust="spacingAndGlyphs">AO4</text><rect class="b" x="496.1" y="257.3" width="40.1" height="49.2"/><path class="o" d="M519.2 257.5V284.5H536"/><text x="500.0" y="274.2" textLength="6.9" lengthAdjust="spacingAndGlyphs">A</text><text x="526.0" y="304.6" textLength="7.2" lengthAdjust="spacingAndGlyphs">C</text><path d="M510.2 269.3H520.5M511.5 266.8V271.8M519.2 266.8V271.8" fill="none" stroke="#f09a42" stroke-width="0.9"/><path d="M530.5 283.2V293.1M528.0 284.5H533.0M528.0 291.8H533.0" fill="none" stroke="#f09a42" stroke-width="0.9"/><rect x="550.9" y="182.2" width="10.2" height="122.6" fill="none" stroke="#f5a548" stroke-width="0.9" stroke-dasharray="1.2 2.25" opacity="0.9"/><rect x="553.4" y="185" width="5.4" height="116" fill="none" stroke="#f5a548" stroke-width="0.7" stroke-dasharray="1.2 2.25" opacity="0.75"/><rect class="q" x="541.2" y="177.0" width="30.0" height="26.4"/><rect class="q" x="541.2" y="283.6" width="30.0" height="26.7"/><text x="545.0" y="175.0" textLength="25.0" lengthAdjust="spacingAndGlyphs">AO9</text><text x="545.4" y="321.3" textLength="20.8" lengthAdjust="spacingAndGlyphs">A10</text><path class="o" d="M639 185.1H693.8V303H639"/><rect class="q" x="628.2" y="177.0" width="30.3" height="26.0"/><rect class="q" x="671.3" y="283.0" width="29.7" height="26.1"/><text x="632.4" y="175.2" textLength="16.6" lengthAdjust="spacingAndGlyphs">A11</text><text x="675.2" y="322.0" textLength="18.8" lengthAdjust="spacingAndGlyphs">A12</text><text x="706.7" y="191.1" textLength="15.7" lengthAdjust="spacingAndGlyphs">A11</text><rect class="b" x="706.3" y="193.6" width="39.2" height="27.1"/><text x="736.5" y="204.5" textLength="6.0" lengthAdjust="spacingAndGlyphs">B</text><path class="o" d="M727 215.5H745"/><path d="M740.2 207.2V216.8M738.2 208.5H742.2M738.2 215.5H742.2" fill="none" stroke="#f09a42" stroke-width="0.9"/><text x="709.7" y="234.0" textLength="18.6" lengthAdjust="spacingAndGlyphs">A12</text><path d="M725.3 247.5V250" fill="none" stroke="#a29f9c" stroke-width="0.7"/><rect class="b" x="706.3" y="235.9" width="39.2" height="28.0"/><text x="738.0" y="247.6" textLength="3.6" lengthAdjust="spacingAndGlyphs">J</text><text x="709.2" y="262.5" textLength="7.2" lengthAdjust="spacingAndGlyphs">C</text><path class="o" d="M706.5 242.3H733"/><path d="M713.4 238.5V250M725.6 238.5V246M731.7 239.5V245" fill="none" stroke="#f09a42" stroke-width="0.9"/><text x="709.7" y="277.0" textLength="18.6" lengthAdjust="spacingAndGlyphs">A13</text><rect class="b" x="706.3" y="279.1" width="39.2" height="27.3"/><text x="728.3" y="290.0" textLength="6.0" lengthAdjust="spacingAndGlyphs">K</text><text x="710.4" y="301.7" textLength="5.2" lengthAdjust="spacingAndGlyphs">L</text><path d="M719.4 297.5H724.4M722.6 295.6V299.4M730.3 291.6V298M731.8 291.6V298M728.8 294H733.4" fill="none" stroke="#f09a42" stroke-width="0.9"/><path d="M875.3 181V306.4" fill="none" stroke="#5f4d3e" stroke-width="1"/><path class="o" d="M815 184.4H871.7V303H815"/><rect class="q" x="799.3" y="177.0" width="29.7" height="26.0"/><rect class="q" x="797.6" y="283.0" width="29.6" height="26.0"/><text x="802.8" y="175.2" textLength="20.2" lengthAdjust="spacingAndGlyphs">A14</text><text x="801.0" y="322.0" textLength="19.2" lengthAdjust="spacingAndGlyphs">A15</text><text x="280.7" y="354.8" font-size="11.5" class="g" fill="#777" textLength="25.0" lengthAdjust="spacingAndGlyphs">Blind</text><text x="425.7" y="354.8" font-size="11.5" class="g" fill="#777" textLength="75.8" lengthAdjust="spacingAndGlyphs">Cabinets 1 Door</text><text x="586.5" y="354.8" font-size="11.5" class="g" fill="#777" textLength="18.0" lengthAdjust="spacingAndGlyphs">90°</text><text x="752.4" y="354.8" font-size="11.5" class="g" fill="#777" textLength="39.0" lengthAdjust="spacingAndGlyphs">Oblique</text><path d="M312 381V506.6M316.6 381V506.6" fill="none" stroke="#c9c5c0" stroke-width="0.7"/><rect class="o" x="328.6" y="385.6" width="39.0" height="116.0"/><rect class="q" x="307.8" y="377.4" width="30.2" height="26.1"/><rect class="q" x="345.7" y="482.8" width="29.9" height="26.2"/><text x="311.3" y="376.0" textLength="25.7" lengthAdjust="spacingAndGlyphs">AO5</text><text x="349.5" y="521.8" textLength="25.8" lengthAdjust="spacingAndGlyphs">AO6</text><text x="384.3" y="392.4" textLength="24.4" lengthAdjust="spacingAndGlyphs">AO5</text><rect class="b" x="380.5" y="394.0" width="40.0" height="49.5"/><path class="o" d="M402.5 443V415H420"/><text x="409.3" y="404.6" textLength="7.0" lengthAdjust="spacingAndGlyphs">B</text><text x="382.2" y="431.7" textLength="9.0" lengthAdjust="spacingAndGlyphs">M</text><path d="M392.7 427.7H403.8M394.0 425.2V430.2M402.5 425.2V430.2" fill="none" stroke="#f09a42" stroke-width="0.9"/><path d="M414.6 406.1V416.3M412.1 407.4H417.1M412.1 415.0H417.1" fill="none" stroke="#f09a42" stroke-width="0.9"/><text x="384.3" y="455.7" textLength="24.6" lengthAdjust="spacingAndGlyphs">AO6</text><rect class="b" x="380.5" y="457.4" width="40.0" height="48.6"/><path class="o" d="M380.8 483.5H398.5V457.8"/><text x="408.7" y="477.6" textLength="9.3" lengthAdjust="spacingAndGlyphs">M</text><text x="383.3" y="504.7" textLength="7.5" lengthAdjust="spacingAndGlyphs">C</text><path d="M397.2 473.5H408.3M398.5 471.0V476.0M407.0 471.0V476.0" fill="none" stroke="#f09a42" stroke-width="0.9"/><path d="M387.4 482.2V493.1M384.9 483.5H389.9M384.9 491.8H389.9" fill="none" stroke="#f09a42" stroke-width="0.9"/><rect class="o" x="433.4" y="385.6" width="53.0" height="116.0"/><rect class="q" x="425.0" y="377.4" width="29.6" height="26.1"/><rect class="q" x="425.0" y="482.8" width="29.6" height="26.2"/><text x="428.5" y="376.0" textLength="25.4" lengthAdjust="spacingAndGlyphs">AO7</text><text x="428.5" y="481.8" textLength="25.4" lengthAdjust="spacingAndGlyphs">AO8</text><text x="500.5" y="392.4" textLength="23.6" lengthAdjust="spacingAndGlyphs">AO7</text><rect class="b" x="496.3" y="394.0" width="40.0" height="49.5"/><path class="o" d="M518.4 443V417H536"/><text x="525.2" y="404.6" textLength="7.0" lengthAdjust="spacingAndGlyphs">B</text><text x="499.8" y="431.7" textLength="7.6" lengthAdjust="spacingAndGlyphs">A</text><path d="M508.7 427.7H519.7M510.0 425.2V430.2M518.4 425.2V430.2" fill="none" stroke="#f09a42" stroke-width="0.9"/><path d="M530.4 408.3V418.3M527.9 409.6H532.9M527.9 417.0H532.9" fill="none" stroke="#f09a42" stroke-width="0.9"/><text x="545.0" y="392.4" textLength="25.4" lengthAdjust="spacingAndGlyphs">AO9</text><rect class="b" x="541.5" y="394.0" width="40.0" height="49.5"/><path class="o" d="M559.4 443V417H542"/><text x="544.0" y="404.6" textLength="9.7" lengthAdjust="spacingAndGlyphs">O</text><text x="570.4" y="431.7" textLength="8.6" lengthAdjust="spacingAndGlyphs">N</text><path d="M558.1 427.7H569.1M559.4 425.2V430.2M567.8 425.2V430.2" fill="none" stroke="#f09a42" stroke-width="0.9"/><path d="M547.6 408.3V418.3M545.1 409.6H550.1M545.1 417.0H550.1" fill="none" stroke="#f09a42" stroke-width="0.9"/><text x="500.5" y="455.7" textLength="24.5" lengthAdjust="spacingAndGlyphs">AO8</text><rect class="b" x="496.3" y="457.4" width="40.0" height="48.6"/><path class="o" d="M518.4 457.8V485H536"/><text x="499.8" y="477.6" textLength="7.6" lengthAdjust="spacingAndGlyphs">A</text><text x="525.9" y="504.7" textLength="8.7" lengthAdjust="spacingAndGlyphs">C</text><path d="M508.7 473.5H519.7M510.0 471.0V476.0M518.4 471.0V476.0" fill="none" stroke="#f09a42" stroke-width="0.9"/><path d="M530.4 483.7V494.7M527.9 485.0H532.9M527.9 493.4H532.9" fill="none" stroke="#f09a42" stroke-width="0.9"/><text x="545.0" y="455.7" textLength="20.9" lengthAdjust="spacingAndGlyphs">A10</text><rect class="b" x="541.5" y="457.4" width="40.0" height="48.6"/><path class="o" d="M559.4 457.8V485H542"/><text x="570.4" y="477.6" textLength="8.6" lengthAdjust="spacingAndGlyphs">N</text><text x="544.3" y="504.7" textLength="6.7" lengthAdjust="spacingAndGlyphs">P</text><path d="M558.1 473.5H569.1M559.4 471.0V476.0M567.8 471.0V476.0" fill="none" stroke="#f09a42" stroke-width="0.9"/><path d="M547.6 483.7V494.7M545.1 485.0H550.1M545.1 493.4H550.1" fill="none" stroke="#f09a42" stroke-width="0.9"/><path d="M598.3 380.2V506M627.2 380.2V506M639.3 383.7V441M586.5 383.7H697.4M639.3 426.1H697.4M694.6 380.2V441" fill="none" stroke="#d2cdc7" stroke-width="0.7"/><rect class="q" x="629.0" y="429.6" width="29.5" height="24.7"/><text x="632.4" y="427.9" textLength="19.1" lengthAdjust="spacingAndGlyphs">A13</text><text x="709.6" y="392.4" textLength="19.4" lengthAdjust="spacingAndGlyphs">A14</text><rect class="b" x="706.5" y="394.1" width="39.6" height="27.9"/><text x="736.0" y="404.6" textLength="7.0" lengthAdjust="spacingAndGlyphs">B</text><text x="709.0" y="420.6" textLength="9.4" lengthAdjust="spacingAndGlyphs">Q</text><path d="M727.6 415.5H744.7M729.8 412.4V418.6M740.2 409.5V419.2M737.6 409.8H743" fill="none" stroke="#f09a42" stroke-width="1"/><text x="709.6" y="435.2" textLength="19.4" lengthAdjust="spacingAndGlyphs">A15</text><rect class="b" x="706.5" y="436.6" width="39.6" height="27.1"/><text x="709.0" y="449.0" textLength="9.4" lengthAdjust="spacingAndGlyphs">Q</text><text x="736.7" y="462.0" textLength="7.0" lengthAdjust="spacingAndGlyphs">C</text><path d="M727.6 444H744.7M729.8 441V447.2M732.6 441V447.2M740.2 440.4V450.4M737.6 450.2H743" fill="none" stroke="#f09a42" stroke-width="1"/><text x="709.6" y="477.6" textLength="19.4" lengthAdjust="spacingAndGlyphs">A16</text><rect class="b" x="706.5" y="478.7" width="39.6" height="27.8"/><text x="735.0" y="504.4" textLength="9.4" lengthAdjust="spacingAndGlyphs">Q</text><path d="M725.3 493.7L730.6 499.7M723.3 495.6L727.4 491.8M728.6 501.6L732.7 497.8" fill="none" stroke="#f09a42" stroke-width="1"/><path d="M764.6 380.2V505.4M752.4 383.7H874.8M764.6 393.4H872.4M872.4 380.2V422L790.7 505.4" fill="none" stroke="#d2cdc7" stroke-width="0.7"/><rect class="q" x="799.3" y="483.5" width="29.7" height="25.5"/><text x="802.8" y="521.0" textLength="20.2" lengthAdjust="spacingAndGlyphs">A16</text></svg><div class="a" style="left:273px;top:580px;width:595px;height:20px;background:#bcd2ee;border-radius:4px 4px 0 0;"></div><span id="t28" class="t" style="left:280.80px;top:582.67px;font-size:12.2px;line-height:12.2px;color:#000;transform:scaleX(0.9104);">Kitchens FF\Doors\External Doors\Base\Cabinets</span><svg style="left:843px;top:579px" width="22" height="22" viewBox="0 0 22 22"><circle cx="11" cy="10.600" r="8.600" fill="#aab4c8" opacity="0.45"/><circle cx="10.800" cy="10.100" r="7.700" fill="#fff" stroke="#8f99ab" stroke-width="0.900"/><path d="M7.600 9.600L10.800 6.600L14 9.600M7.600 13.600L10.800 10.600L14 13.600" fill="none" stroke="#1c2a4a" stroke-width="1.500"/></svg><div class="a" style="left:799px;top:600px;width:66px;height:162px;background:#fff;"></div><div class="a" style="left:285px;top:621px;width:580px;height:1px;background:#a0a0a0;"></div><span id="t29" class="t" style="left:290.20px;top:605.67px;font-size:12.2px;line-height:12.2px;color:#000;transform:scaleX(0.8687);">A - Side Overlay</span><span id="t30" class="t" style="left:803.20px;top:605.67px;font-size:12.2px;line-height:12.2px;color:#000;transform:scaleX(0.8764);">25.4</span><div class="a" style="left:285px;top:641px;width:580px;height:1px;background:#a0a0a0;"></div><span id="t31" class="t" style="left:290.20px;top:625.67px;font-size:12.2px;line-height:12.2px;color:#000;transform:scaleX(0.8894);">B - Top Overlay</span><span id="t32" class="t" style="left:803.20px;top:625.67px;font-size:12.2px;line-height:12.2px;color:#000;transform:scaleX(0.8764);">12.7</span><div class="a" style="left:285px;top:661px;width:580px;height:1px;background:#a0a0a0;"></div><span id="t33" class="t" style="left:290.20px;top:645.67px;font-size:12.2px;line-height:12.2px;color:#000;transform:scaleX(0.8502);">C - Bottom Overlay</span><span id="t34" class="t" style="left:803.20px;top:645.67px;font-size:12.2px;line-height:12.2px;color:#000;transform:scaleX(0.8764);">12.7</span><div class="a" style="left:285px;top:681px;width:580px;height:1px;background:#a0a0a0;"></div><span id="t35" class="t" style="left:290.20px;top:665.67px;font-size:12.2px;line-height:12.2px;color:#000;transform:scaleX(0.8822);">D - Mid Door Top Overlay</span><span id="t36" class="t" style="left:803.20px;top:665.67px;font-size:12.2px;line-height:12.2px;color:#000;transform:scaleX(0.8764);">12.7</span><div class="a" style="left:285px;top:701px;width:580px;height:1px;background:#a0a0a0;"></div><span id="t37" class="t" style="left:290.20px;top:685.67px;font-size:12.2px;line-height:12.2px;color:#000;transform:scaleX(0.8805);">E - Mid Drawer Top Overlay</span><span id="t38" class="t" style="left:803.20px;top:685.67px;font-size:12.2px;line-height:12.2px;color:#000;transform:scaleX(0.8764);">12.7</span><div class="a" style="left:285px;top:721px;width:580px;height:1px;background:#a0a0a0;"></div><div class="a" style="left:285px;top:702px;width:513px;height:19px;background:#0078d7;"></div><div class="a" style="left:802px;top:705px;width:23px;height:13px;background:#0078d7;"></div><span id="t39" class="t" style="left:290.20px;top:705.67px;font-size:12.2px;line-height:12.2px;color:#fff;transform:scaleX(0.8610);">F - Mid Drawer Bottom Overlay</span><span id="t40" class="t" style="left:803.20px;top:705.67px;font-size:12.2px;line-height:12.2px;color:#fff;transform:scaleX(0.8764);">12.7</span><div class="a" style="left:285px;top:741px;width:580px;height:1px;background:#a0a0a0;"></div><span id="t41" class="t" style="left:290.20px;top:725.67px;font-size:12.2px;line-height:12.2px;color:#000;transform:scaleX(0.8729);">G - Central Reveal Between Doors/ Drawers</span><span id="t42" class="t" style="left:803.20px;top:725.67px;font-size:12.2px;line-height:12.2px;color:#000;transform:scaleX(0.8764);">3.18</span><div class="a" style="left:285px;top:761px;width:580px;height:1px;background:#a0a0a0;"></div><span id="t43" class="t" style="left:290.20px;top:745.67px;font-size:12.2px;line-height:12.2px;color:#000;transform:scaleX(0.8678);">H - Central Overlay Between Doors/ Drawers</span><span id="t44" class="t" style="left:803.20px;top:745.67px;font-size:12.2px;line-height:12.2px;color:#000;transform:scaleX(0.8764);">12.7</span><div class="a" style="left:876px;top:595px;width:2.400px;height:112px;background:#7d7d7d;border-radius:1px;"></div><div class="a" style="left:271px;top:765px;width:614px;height:64px;border:1px solid #7f7f7f;background:#f0f0f0;"></div><span id="t45" class="t" style="left:279.60px;top:769.67px;font-size:12.2px;line-height:12.2px;color:#000;font-weight:bold;transform:scaleX(0.9040);">Mid Drawer Bottom Overlay</span><span id="t46" class="t" style="left:279.60px;top:786.67px;font-size:12.2px;line-height:12.2px;color:#000;transform:scaleX(0.9037);">Defines the overlay from the bottom face of the front of the drawer until the top face of the middle frame</span>
</body></html>
